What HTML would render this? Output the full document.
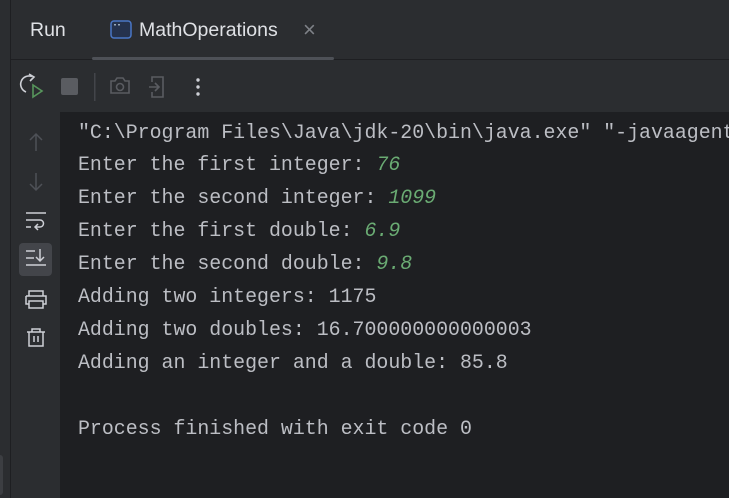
<!DOCTYPE html>
<html><head><style>
body{margin:0;width:729px;height:498px;background:#2b2d30;position:relative;overflow:hidden;font-family:"Liberation Sans",sans-serif}
.abs{position:absolute}
.con{left:60px;top:112px;width:669px;height:386px;background:#1e1f22}
.line{position:absolute;left:78px;font-family:"Liberation Mono",monospace;font-size:19.9px;color:#bcbec4;white-space:pre;line-height:24px}
.g{color:#6aab73;font-style:italic}
</style></head><body>
<div class="abs" style="left:10px;top:0;width:1px;height:498px;background:#1e1f22"></div>
<div class="abs" style="left:11px;top:59px;width:718px;height:1px;background:#1e1f22"></div>
<div class="abs" style="left:30px;top:19px;font-size:19.5px;color:#dfe1e5">Run</div>
<svg class="abs" style="left:110px;top:20px" width="22" height="20"><rect x="1" y="1" width="20" height="17" rx="3" fill="#25324d" stroke="#4a77c7" stroke-width="1.5"/><rect x="4" y="4" width="2" height="1.5" fill="#9ab"/><rect x="8" y="4" width="2" height="1.5" fill="#9ab"/></svg>
<div class="abs" style="left:139px;top:19px;font-size:19.5px;color:#dfe1e5">MathOperations</div>
<div class="abs" style="left:303px;top:17px;font-size:22px;color:#7f8288">×</div>
<div class="abs" style="left:92px;top:57px;width:242px;height:3px;border-radius:2px;background:#4e5157"></div>
<svg class="abs" style="left:18px;top:73px" width="200" height="28">
<path d="M14 3.5 A8 8 0 1 0 8 19" fill="none" stroke="#ced0d6" stroke-width="1.6"/><path d="M11 1 L16 4 L12 8" fill="none" stroke="#ced0d6" stroke-width="1.6"/>
<path d="M15 12 L24 18 L15 24 Z" fill="none" stroke="#57965c" stroke-width="1.6"/>
<rect x="43" y="5" width="17" height="17" rx="2" fill="#5a5c61"/>
<rect x="76" y="0" width="1.5" height="28" fill="#43454a"/>
<path d="M93 8 h4 l2-3 h6 l2 3 h4 v12 h-18 z" fill="none" stroke="#5a5c61" stroke-width="1.6"/><circle cx="102" cy="14" r="3.5" fill="none" stroke="#5a5c61" stroke-width="1.6"/>
<path d="M134 9 v-5 h11 v20 h-11 v-5 M131 14 h10 M137 10 l4 4 -4 4" fill="none" stroke="#5a5c61" stroke-width="1.6"/>
<circle cx="180" cy="7" r="1.7" fill="#ced0d6"/><circle cx="180" cy="14" r="1.7" fill="#ced0d6"/><circle cx="180" cy="21" r="1.7" fill="#ced0d6"/>
</svg>
<div class="abs con"></div>
<svg class="abs" style="left:18px;top:130px" width="36" height="225">
<path d="M18 4 v17 M12 10 l6-6 6 6" fill="none" stroke="#4e5157" stroke-width="1.5"/>
<path d="M18 43 v17 M12 54 l6 6 6-6" fill="none" stroke="#4e5157" stroke-width="1.5"/>
<path d="M8 83 h20 M8 90 h14 a3.5 3.5 0 0 1 0 7 h-4 M20 94 l-3 3 3 3 M8 97 h5" fill="none" stroke="#ced0d6" stroke-width="1.5"/>
<rect x="1" y="113" width="33" height="33" rx="4" fill="#43454a"/>
<path d="M8 121 h9 M8 128 h8 M8 135 h20 M22 119 v12 M18 127 l4 4 4-4" fill="none" stroke="#ced0d6" stroke-width="1.5"/>
<path d="M11 166 v-5 h14 v5 M8 166 h20 v8 h-3 M11 174 h-3 v-8 M11 171 h14 v7 h-14 z" fill="none" stroke="#ced0d6" stroke-width="1.5"/>
<path d="M9 202 h18 M14 202 v-3 h8 v3 M11 202 v14 h14 v-14 M16 206 v6 M20 206 v6" fill="none" stroke="#ced0d6" stroke-width="1.5"/>
</svg>
<div class="abs" style="left:0;top:455px;width:3px;height:40px;border-radius:0 3px 3px 0;background:#3c3e42"></div>
<div class="line" style="top:121px">"C:\Program Files\Java\jdk-20\bin\java.exe" "-javaagent</div>
<div class="line" style="top:153px">Enter the first integer: <span class="g">76</span></div>
<div class="line" style="top:186px">Enter the second integer: <span class="g">1099</span></div>
<div class="line" style="top:219px">Enter the first double: <span class="g">6.9</span></div>
<div class="line" style="top:252px">Enter the second double: <span class="g">9.8</span></div>
<div class="line" style="top:285px">Adding two integers: 1175</div>
<div class="line" style="top:318px">Adding two doubles: 16.700000000000003</div>
<div class="line" style="top:351px">Adding an integer and a double: 85.8</div>
<div class="line" style="top:417px">Process finished with exit code 0</div>
</body></html>
